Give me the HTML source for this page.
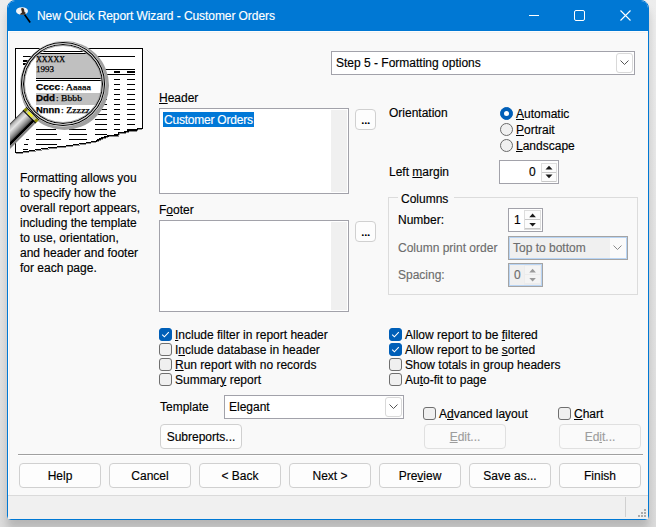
<!DOCTYPE html>
<html><head><meta charset="utf-8">
<style>
html,body{margin:0;padding:0;width:656px;height:527px;overflow:hidden;}
*{box-sizing:border-box;}
body{font-family:"Liberation Sans",sans-serif;font-size:12px;color:#000;-webkit-text-stroke:0.15px currentColor;position:relative;background:linear-gradient(to bottom,#ededed 0,#e4e4e4 50%,#dcdcdc 100%);}
.a{position:absolute;}
.t{position:absolute;white-space:nowrap;line-height:15px;height:15px;}
u{text-decoration:underline;text-underline-offset:1px;text-decoration-thickness:1px;}
#shadow{position:absolute;left:7px;top:0;width:642px;height:520px;border-radius:8px 8px 4px 4px;box-shadow:0 9px 9px rgba(0,0,0,0.17);}
#win{position:absolute;left:7px;top:0;width:642px;height:520px;border:1px solid #0078d4;border-radius:8px 8px 4px 4px;background:#f9f9f9;overflow:hidden;}
#title{position:absolute;left:0;top:0;width:640px;height:30px;background:#0078d4;color:#fff;}
.tb{position:absolute;border:1px solid #a2a2aa;background:#fff;}
.btn{position:absolute;border:1px solid #d0d0d0;border-radius:4px;background:#fdfdfd;text-align:center;}
.btn span{position:absolute;left:0;right:0;line-height:15px;}
.cb{position:absolute;width:13px;height:13px;border:1px solid #6f6f6f;border-radius:3px;background:#f0f0f0;}
.cb.on{background:#005fb8;border-color:#005fb8;}
.combo{position:absolute;border:1px solid #a2a2aa;background:#fff;}
.dd{position:absolute;border:1px solid #d9d9d9;border-radius:3px;background:#fff;}
.rb{position:absolute;width:13px;height:13px;border-radius:50%;border:1px solid #6a6a6a;background:#f0f0f0;}
.dis{color:#6d6d6d;}
</style></head><body>
<div id="shadow"></div>
<div id="win">
  <div class="a" style="left:0;top:30px;width:640px;height:465px;box-shadow:inset 1px 1px 0 #fdfdfd, inset 2px 2px 0 #f2f2f2;"></div>
  <div id="title">
    <svg class="a" style="left:7px;top:5px" width="18" height="18" viewBox="0 0 18 18">
      <ellipse cx="7" cy="5" rx="6" ry="3.8" fill="#f2f4f6"/>
      <path d="M6 2.5 Q8 1.5 9 3 L9.5 6 L11 7 L9 8.8 L5 8.8 Q5.5 7 7 6.5 Z" fill="#3a2a20"/>
      <path d="M9.5 8.5 L15.2 16.5" stroke="#000" stroke-width="1.6"/>
    </svg>
    <div class="t" style="left:29px;top:8px;letter-spacing:-0.07px;">New Quick Report Wizard - Customer Orders</div>
    <div class="a" style="left:521px;top:14px;width:10px;height:1px;background:#fff;"></div>
    <div class="a" style="left:566px;top:9px;width:11px;height:11px;border:1px solid #fff;border-radius:2px;"></div>
    <svg class="a" style="left:612px;top:9px" width="11" height="11" viewBox="0 0 11 11"><path d="M0.5 0.5 L10.5 10.5 M10.5 0.5 L0.5 10.5" stroke="#fff" stroke-width="1.1"/></svg>
  </div>
</div>

<!-- magnifier picture -->
<svg class="a" style="left:0;top:36px" width="156" height="124" viewBox="0 36 156 124" shape-rendering="crispEdges">
  <defs>
    <clipPath id="lens"><circle cx="63" cy="84" r="39"/></clipPath>
    <clipPath id="paperclip"><rect x="10" y="36" width="146" height="124"/></clipPath>
    <linearGradient id="hg" x1="0" y1="0" x2="1" y2="0">
      <stop offset="0" stop-color="#202020"/>
      <stop offset="0.07" stop-color="#909090"/>
      <stop offset="0.12" stop-color="#b8b8b8"/>
      <stop offset="0.3" stop-color="#e4e4e4"/>
      <stop offset="0.48" stop-color="#b0b0b0"/>
      <stop offset="0.62" stop-color="#808080"/>
      <stop offset="0.72" stop-color="#505050"/>
      <stop offset="0.76" stop-color="#000"/>
      <stop offset="0.86" stop-color="#000"/>
      <stop offset="0.88" stop-color="#7a7a7a"/>
      <stop offset="1" stop-color="#8a8a8a"/>
    </linearGradient>
  </defs>
  <!-- paper -->
  <path d="M15.5 48.5 H142.5 V128.5 H138 L135.5 130.5 H129.5 L123.5 132.5 H119 L117.5 135.5 H109 L101 138.5 L96 141 L87 142.8 L73 145 L62 146.5 L52 147.5 L41.5 149 L32 150.5 L23 152 L15.5 152.5 Z" fill="#fff" stroke="#000" stroke-width="1"/>
  <path d="M142 129.5 H138.5 L136 131.5 H130 L124 133.5 H119.5 L118 136.5 H109.5 L101.5 139.5 L96.5 142 L87.5 143.8 L73.5 146 L62.5 147.5 L52.5 148.5 L42 150 L32.5 151.5 L23.5 153 L16 153.5" fill="none" stroke="#8c8c8c" stroke-width="1"/>
  <path d="M138 128.5 L135.5 130.5 H129.5 L123.5 132.5 H119 L117.5 135.5 H109 L101 138.5 L96 141" fill="none" stroke="#000" stroke-width="1.6"/>
  <g fill="#000">
    <rect x="23" y="56" width="112" height="1"/>
    <rect x="23" y="60" width="10" height="2"/>
    <rect x="23" y="63" width="8" height="2"/>
    <rect x="105" y="69" width="30" height="1"/>
    <rect x="105" y="74" width="30" height="1"/>
    <rect x="114" y="71" width="6" height="2"/>
    <rect x="127" y="71" width="8" height="2"/>
  </g>
  <g fill="#000" id="dashes">
    <rect x="114" y="79" width="6" height="1"/><rect x="127" y="79" width="8" height="1"/>
    <rect x="114" y="84" width="6" height="1"/><rect x="127" y="84" width="8" height="1"/>
    <rect x="114" y="89" width="6" height="1"/><rect x="127" y="89" width="8" height="1"/>
    <rect x="114" y="94" width="6" height="1"/><rect x="127" y="94" width="8" height="1"/>
    <rect x="100" y="99" width="7" height="1"/><rect x="114" y="99" width="6" height="1"/><rect x="127" y="99" width="8" height="1"/>
    <rect x="98" y="104" width="9" height="1"/><rect x="114" y="104" width="6" height="1"/><rect x="127" y="104" width="8" height="1"/>
    <rect x="96" y="109" width="11" height="1"/><rect x="114" y="109" width="6" height="1"/><rect x="127" y="109" width="8" height="1"/>
    <rect x="95" y="114" width="12" height="1"/><rect x="114" y="114" width="6" height="1"/><rect x="127" y="114" width="8" height="1"/>
    <rect x="95" y="119" width="12" height="1"/><rect x="114" y="119" width="6" height="1"/><rect x="127" y="119" width="8" height="1"/>
    <rect x="95" y="124" width="12" height="1"/><rect x="114" y="124" width="6" height="1"/><rect x="127" y="124" width="8" height="1"/>
    <rect x="36" y="129" width="20" height="1"/><rect x="69" y="129" width="17" height="1"/><rect x="95" y="129" width="12" height="1"/><rect x="114" y="129" width="6" height="1"/><rect x="127" y="129" width="8" height="1"/>
    <rect x="36" y="134" width="21" height="1"/><rect x="69" y="134" width="18" height="1"/><rect x="95" y="134" width="12" height="1"/><rect x="114" y="134" width="4" height="1"/>
    <rect x="26" y="139" width="3" height="1"/><rect x="36" y="139" width="25" height="1"/><rect x="69" y="139" width="18" height="1"/>
    <rect x="24" y="144" width="4" height="1"/><rect x="36" y="144" width="21" height="1"/>
    <rect x="23" y="149" width="5" height="1"/>
  </g>
  <!-- lens shadow -->
  <circle cx="64.5" cy="85.5" r="44.5" fill="#a0a0a0" shape-rendering="auto"/><circle cx="63" cy="84" r="42.5" fill="#fff" shape-rendering="auto"/>
  <!-- lens content -->
  <circle cx="63" cy="84" r="39.5" fill="#fff"/>
  <g clip-path="url(#lens)">
    <rect x="36" y="51" width="70" height="1" fill="#000"/>
    <rect x="36" y="53" width="70" height="1" fill="#000"/>
    <rect x="36" y="54" width="70" height="24" fill="#c0c0c0"/>
    <rect x="36" y="78" width="70" height="1" fill="#000"/>
    <rect x="36" y="80" width="70" height="1" fill="#000"/>
    <rect x="36" y="93" width="70" height="12" fill="#c0c0c0"/>
    <g font-family="Liberation Serif" font-size="8.5" shape-rendering="auto" stroke="#000" stroke-width="0.25">
      <text x="36" y="62" textLength="29" lengthAdjust="spacingAndGlyphs">XXXXX</text>
      <text x="36" y="72" textLength="18" lengthAdjust="spacingAndGlyphs">1993</text>
      <text x="36" y="89.8" font-family="Liberation Sans" font-weight="bold" font-size="8.5" textLength="24" lengthAdjust="spacingAndGlyphs">Cccc</text>
      <text x="61" y="89.8" textLength="30" lengthAdjust="spacingAndGlyphs">: Aaaaa</text>
      <text x="36" y="100.8" font-family="Liberation Sans" font-weight="bold" font-size="8.5" textLength="19" lengthAdjust="spacingAndGlyphs">Ddd</text>
      <text x="56" y="100.8" textLength="26" lengthAdjust="spacingAndGlyphs">: Bbbb</text>
      <text x="36" y="113.3" font-family="Liberation Sans" font-weight="bold" font-size="8.5" textLength="24" lengthAdjust="spacingAndGlyphs">Nnnn</text>
      <text x="61" y="113.3" textLength="29" lengthAdjust="spacingAndGlyphs">: Zzzzz</text>
    </g>
  </g>
  <g fill="none" shape-rendering="auto">
    <circle cx="63" cy="84" r="38.5" stroke="#a8a8a8" stroke-width="1"/>
    <circle cx="63" cy="84" r="39.5" stroke="#000" stroke-width="1.1"/>
    <circle cx="63" cy="84" r="40.5" stroke="#c8c8c8" stroke-width="0.9"/>
    <circle cx="63" cy="84" r="41.5" stroke="#000" stroke-width="1.1"/>
  </g>
  <!-- handle -->
  <g clip-path="url(#paperclip)"><g transform="translate(32.2,114) rotate(45)" shape-rendering="auto">
    <rect x="-9" y="0" width="18" height="48" fill="url(#hg)"/>
    <rect x="-9" y="-1" width="18" height="1" fill="#000"/>
    <rect x="-9" y="0" width="18" height="3.5" fill="#c8c8a0"/>
    <rect x="-9" y="0" width="3" height="3.5" fill="#8a8a00"/>
    <rect x="6" y="0" width="3" height="3.5" fill="#8a8a00"/>
    <rect x="-4" y="0.5" width="6" height="2.5" fill="#f0f020"/>
    <rect x="-9" y="3.5" width="18" height="1" fill="#000"/>
  </g></g>
</svg>

<!-- left text -->
<div class="a" style="left:20px;top:171px;line-height:15px;width:140px;">Formatting allows you<br>to specify how the<br>overall report appears,<br>including the template<br>to use, orientation,<br>and header and footer<br>for each page.</div>

<!-- step combo -->
<div class="combo" style="left:331px;top:51px;width:304px;height:24px;"></div>
<div class="dd" style="left:616px;top:53px;width:17px;height:20px;"></div>
<svg class="a" style="left:620px;top:60px" width="9" height="6" viewBox="0 0 9 6"><path d="M0.5 0.5 L4.5 4.5 L8.5 0.5" fill="none" stroke="#555" stroke-width="1"/></svg>
<div class="t" style="left:336px;top:56px;">Step 5 - Formatting options</div>

<!-- header -->
<div class="t" style="left:159px;top:91px;"><u>H</u>eader</div>
<div class="tb" style="left:159px;top:108px;width:190px;height:86px;"></div>
<div class="a" style="left:331px;top:110px;width:16px;height:82px;background:#f0f0f0;"></div>
<div class="a" style="left:163px;top:112px;width:91px;height:15px;background:#0078d7;"></div>
<div class="t" style="left:164px;top:113px;color:#fff;letter-spacing:-0.22px;">Customer Orders</div>
<div class="btn" style="left:355px;top:109px;width:21px;height:21px;"></div>
<div class="t" style="left:361px;top:113px;letter-spacing:-0.4px;text-shadow:0.3px 0 0 #000;">...</div>

<div class="t" style="left:159px;top:203px;">F<u>o</u>oter</div>
<div class="tb" style="left:159px;top:220px;width:190px;height:92px;"></div>
<div class="a" style="left:331px;top:222px;width:16px;height:88px;background:#f0f0f0;"></div>
<div class="btn" style="left:355px;top:221px;width:21px;height:21px;"></div>
<div class="t" style="left:361px;top:225px;letter-spacing:-0.4px;text-shadow:0.3px 0 0 #000;">...</div>

<div class="t" style="left:389px;top:106px;">Orientation</div>
<div class="rb" style="left:500px;top:107px;background:#005fb8;border-color:#005fb8;"><div class="a" style="left:3px;top:3px;width:5px;height:5px;border-radius:50%;background:#fff;"></div></div>
<div class="rb" style="left:500px;top:123px;"></div>
<div class="rb" style="left:500px;top:139px;"></div>
<div class="t" style="left:516px;top:107px;"><u>A</u>utomatic</div>
<div class="t" style="left:516px;top:123px;"><u>P</u>ortrait</div>
<div class="t" style="left:516px;top:139px;"><u>L</u>andscape</div>

<div class="t" style="left:389px;top:165px;">Left <u>m</u>argin</div>
<div class="combo" style="left:499px;top:160px;width:60px;height:24px;"></div>
<div class="t" style="left:529px;top:165px;">0</div>
<div class="a" style="left:541px;top:163px;width:16px;height:19px;background:#dddddd;"></div>
<div class="a" style="left:542px;top:164px;width:14px;height:8px;background:#fcfcfc;box-shadow:0 1px 0 #c8c8c8;"></div>
<div class="a" style="left:542px;top:173px;width:14px;height:8px;background:#fcfcfc;box-shadow:0 1px 0 #c8c8c8;"></div>
<svg class="a" style="left:544px;top:164px" width="10" height="16" viewBox="544 164 10 16"><path d="M545.5 169.5 L552.5 169.5 L549 165.8 Z M545.5 174.5 L552.5 174.5 L549 178.2 Z" fill="#1a1a1a"/></svg>

<!-- columns group -->
<div class="a" style="left:388px;top:197px;width:250px;height:98px;border:1px solid #dcdcdc;"></div>
<div class="a" style="left:398px;top:196px;width:56px;height:4px;background:#f9f9f9;"></div>
<div class="t" style="left:401px;top:192px;">Columns</div>
<div class="t" style="left:398px;top:213px;">Number:</div>
<div class="combo" style="left:508px;top:208px;width:35px;height:24px;"></div>
<div class="t" style="left:514px;top:213px;">1</div>
<div class="a" style="left:524px;top:210px;width:17px;height:20px;background:#dddddd;"></div>
<div class="a" style="left:525px;top:211px;width:15px;height:8px;background:#fcfcfc;box-shadow:0 1px 0 #c8c8c8;"></div>
<div class="a" style="left:525px;top:220px;width:15px;height:8px;background:#fcfcfc;box-shadow:0 1px 0 #c8c8c8;"></div>
<svg class="a" style="left:528px;top:212px" width="10" height="16" viewBox="528 212 10 16"><path d="M529.3 217.2 L535.9 217.2 L532.6 213.6 Z M529.3 223 L535.9 223 L532.6 226.6 Z" fill="#1a1a1a"/></svg>

<div class="t dis" style="left:398px;top:241px;">Column print order</div>
<div class="combo" style="left:508px;top:236px;width:120px;height:24px;background:#f0f0f0;border-color:#a4a4a4;box-shadow:inset 0 0 0 1px #b8d4f4;"></div>
<div class="a" style="left:610px;top:238px;width:16px;height:20px;background:#fafafa;"></div>
<svg class="a" style="left:613px;top:245px" width="9" height="6" viewBox="0 0 9 6"><path d="M0.5 0.5 L4.5 4.5 L8.5 0.5" fill="none" stroke="#8a8a8a" stroke-width="1"/></svg>
<div class="t dis" style="left:513px;top:241px;">Top to bottom</div>
<div class="t dis" style="left:398px;top:268px;">Spacing:</div>
<div class="combo" style="left:508px;top:263px;width:35px;height:24px;background:#f0f0f0;border-color:#a4a4a4;box-shadow:inset 0 0 0 1px #b8d4f4;"></div>
<div class="t dis" style="left:514px;top:268px;">0</div>
<div class="a" style="left:524px;top:265px;width:17px;height:20px;background:#ececec;"></div>
<div class="a" style="left:525px;top:266px;width:15px;height:8px;background:#f4f4f4;"></div>
<div class="a" style="left:525px;top:275px;width:15px;height:8px;background:#f4f4f4;"></div>
<svg class="a" style="left:528px;top:267px" width="10" height="16" viewBox="528 267 10 16"><path d="M529.3 272.4 L535.9 272.4 L532.6 268.8 Z M529.3 278 L535.9 278 L532.6 281.6 Z" fill="#9a9a9a"/></svg>


<!-- checkboxes -->
<div class="cb on" style="left:159px;top:328px;"><svg class="a" style="left:0;top:0" width="11" height="11" viewBox="0 0 11 11"><path d="M2.2 5.6 L4.4 7.8 L8.8 3.2" fill="none" stroke="#fff" stroke-width="1.1"/></svg></div>
<div class="cb" style="left:159px;top:343px;"></div>
<div class="cb" style="left:159px;top:358px;"></div>
<div class="cb" style="left:159px;top:373px;"></div>
<div class="t" style="left:175px;top:328px;"><u>I</u>nclude filter in report header</div>
<div class="t" style="left:175px;top:343px;">I<u>n</u>clude database in header</div>
<div class="t" style="left:175px;top:358px;"><u>R</u>un report with no records</div>
<div class="t" style="left:175px;top:373px;">Summar<u>y</u> report</div>

<div class="cb on" style="left:389px;top:328px;"><svg class="a" style="left:0;top:0" width="11" height="11" viewBox="0 0 11 11"><path d="M2.2 5.6 L4.4 7.8 L8.8 3.2" fill="none" stroke="#fff" stroke-width="1.1"/></svg></div>
<div class="cb on" style="left:389px;top:343px;"><svg class="a" style="left:0;top:0" width="11" height="11" viewBox="0 0 11 11"><path d="M2.2 5.6 L4.4 7.8 L8.8 3.2" fill="none" stroke="#fff" stroke-width="1.1"/></svg></div>
<div class="cb" style="left:389px;top:358px;"></div>
<div class="cb" style="left:389px;top:373px;"></div>
<div class="t" style="left:405px;top:328px;">Allow report to be <u>f</u>iltered</div>
<div class="t" style="left:405px;top:343px;">Allow report to be <u>s</u>orted</div>
<div class="t" style="left:405px;top:358px;">Show totals in <u>g</u>roup headers</div>
<div class="t" style="left:405px;top:373px;">Au<u>t</u>o-fit to page</div>

<div class="t" style="left:160px;top:400px;">Template</div>
<div class="combo" style="left:224px;top:395px;width:180px;height:24px;"></div>
<div class="dd" style="left:385px;top:397px;width:17px;height:20px;"></div>
<svg class="a" style="left:389px;top:404px" width="9" height="6" viewBox="0 0 9 6"><path d="M0.5 0.5 L4.5 4.5 L8.5 0.5" fill="none" stroke="#555" stroke-width="1"/></svg>
<div class="t" style="left:229px;top:400px;">Elegant</div>

<div class="cb" style="left:423px;top:407px;"></div>
<div class="t" style="left:439px;top:407px;">A<u>d</u>vanced layout</div>
<div class="cb" style="left:558px;top:407px;"></div>
<div class="t" style="left:574px;top:407px;"><u>C</u>hart</div>

<div class="btn" style="left:160px;top:424px;width:82px;height:25px;"><span style="top:5px;">Subreports...</span></div>
<div class="btn" style="left:424px;top:424px;width:82px;height:25px;color:#9d9d9d;border-color:#e0e0e0;background:#fafafa;"><span style="top:5px;"><u>E</u>dit...</span></div>
<div class="btn" style="left:559px;top:424px;width:82px;height:25px;color:#9d9d9d;border-color:#e0e0e0;background:#fafafa;"><span style="top:5px;">Ed<u>i</u>t...</span></div>

<div class="a" style="left:18px;top:454px;width:625px;height:1px;background:#a0a0a0;"></div>
<div class="a" style="left:18px;top:455px;width:625px;height:1px;background:#fff;"></div>

<div class="btn" style="left:19px;top:463px;width:82px;height:25px;"><span style="top:5px;">Help</span></div>
<div class="btn" style="left:109px;top:463px;width:82px;height:25px;"><span style="top:5px;">Cancel</span></div>
<div class="btn" style="left:199px;top:463px;width:82px;height:25px;"><span style="top:5px;">&lt; Back</span></div>
<div class="btn" style="left:289px;top:463px;width:82px;height:25px;"><span style="top:5px;">Next &gt;</span></div>
<div class="btn" style="left:379px;top:463px;width:82px;height:25px;"><span style="top:5px;">Pre<u>v</u>iew</span></div>
<div class="btn" style="left:469px;top:463px;width:82px;height:25px;"><span style="top:5px;">Save as...</span></div>
<div class="btn" style="left:559px;top:463px;width:82px;height:25px;"><span style="top:5px;">Finish</span></div>

<!-- status bar -->
<div class="a" style="left:8px;top:495px;width:640px;height:24px;background:#f0f0f0;border-top:1px solid #dadada;"></div>
<div class="a" style="left:625px;top:497px;width:1px;height:20px;background:#d0d0d0;"></div>
<svg class="a" style="left:638px;top:509px" width="10" height="10" viewBox="0 0 10 10" fill="#ababab">
  <rect x="6" y="0" width="2" height="2"/><rect x="3" y="3" width="2" height="2"/><rect x="6" y="3" width="2" height="2"/>
  <rect x="0" y="6" width="2" height="2"/><rect x="3" y="6" width="2" height="2"/><rect x="6" y="6" width="2" height="2"/>
</svg>
</body></html>
